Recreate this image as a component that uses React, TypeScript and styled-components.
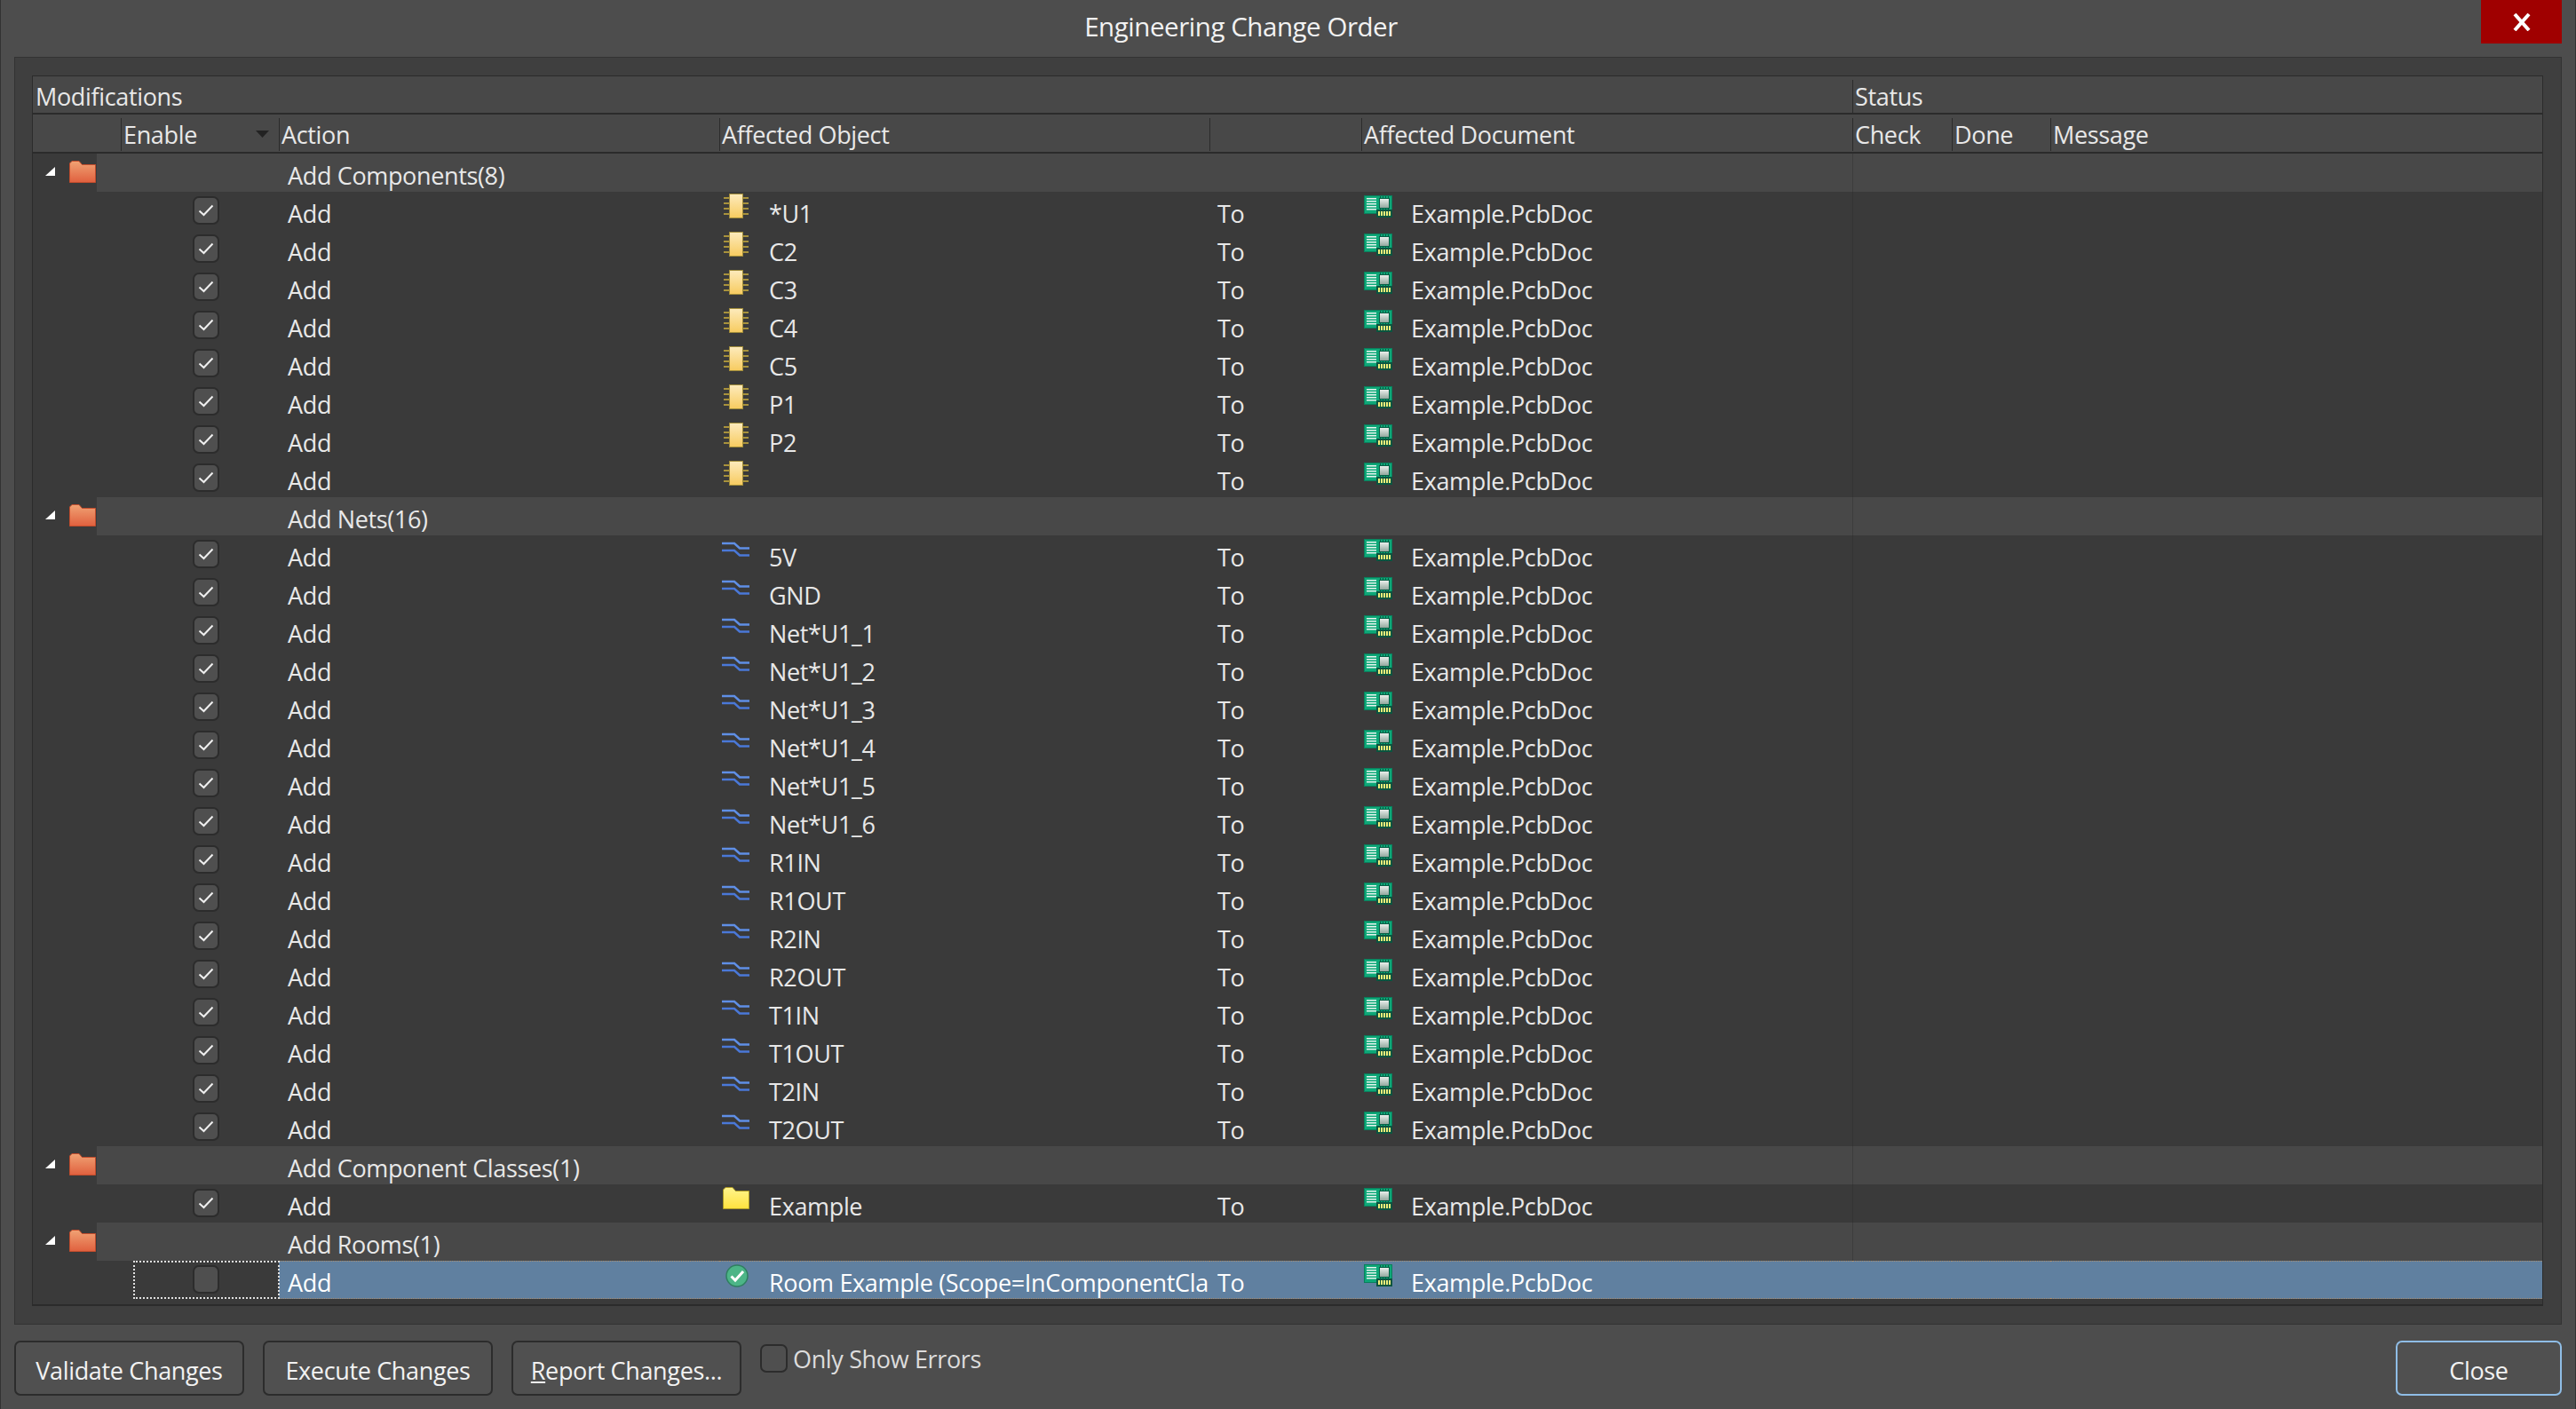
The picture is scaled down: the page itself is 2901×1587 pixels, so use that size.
import React from 'react'
import styled, { createGlobalStyle } from 'styled-components'

const COLUMNS = '99px 178px 496px 552px 171px 553px 112px 111px 1fr'
const LINE = '#2b2b2b'

const GlobalStyle = createGlobalStyle`
  html, body {
    margin: 0;
    padding: 0;
    background: #4d4d4d;
  }
  * {
    box-sizing: border-box;
  }
`

const Window = styled.div`
  width: 2901px;
  height: 1587px;
  display: flex;
  flex-direction: column;
  background: #4d4d4d;
  color: #e8e8e8;
  font-family: 'Open Sans', 'Noto Sans', sans-serif;
  font-size: 27px;
  letter-spacing: -0.35px;
  border-left: 1px solid #333;
  border-right: 1px solid #333;
  overflow: hidden;
`

const TitleBar = styled.div`
  position: relative;
  height: 64px;
  flex: none;
  text-align: center;
  font-size: 29.5px;
  letter-spacing: -0.45px;
  line-height: 60px;
  color: #f2f2f2;
  padding-right: 106px;
`

const CloseBox = styled.div`
  position: absolute;
  top: 0;
  right: 15px;
  width: 91px;
  height: 49px;
  background: #a00000;
  display: flex;
  align-items: center;
  justify-content: center;
`

const Panel = styled.div`
  margin: 0 15px;
  height: 1428px;
  flex: none;
  padding: 20px 20px 20px 19px;
  background: #3f3f3f;
  border: 1px solid #333;
`

const Table = styled.div`
  height: 100%;
  background: #3a3a3a;
  border-style: solid;
  border-width: 1px 1px 2px 1px;
  border-color: ${LINE};
`

const HeaderTop = styled.div`
  display: grid;
  grid-template-columns: 2049px 1fr;
  height: 43px;
  background: #484848;
  border-bottom: 2px solid ${LINE};
`

const HeaderBottom = styled.div`
  display: grid;
  grid-template-columns: ${COLUMNS};
  height: 44px;
  background: #484848;
  border-bottom: 2px solid ${LINE};
`

const HeaderCell = styled.div<{ $divider?: boolean }>`
  display: flex;
  justify-content: space-between;
  margin: 4px 0 3px;
  padding: 0 11px 0 2px;
  line-height: 37px;
  white-space: nowrap;
  border-left: 1px solid ${({ $divider }) => ($divider ? LINE : 'transparent')};
`

const SortArrow = styled.span`
  width: 15px;
  height: 8px;
  margin-top: 14px;
  background: #222;
  clip-path: polygon(0 0, 100% 0, 50% 100%);
`

const GroupRow = styled.div`
  display: flex;
  height: 43px;
`

const GroupLead = styled.div`
  width: 72px;
  flex: none;
  display: flex;
  align-items: flex-start;
  padding: 8px 0 0 14px;
`

const Expander = styled.span`
  width: 11px;
  height: 10px;
  flex: none;
  margin: 7px 16px 0 0;
  background: #fff;
  clip-path: polygon(100% 0, 100% 100%, 0 100%);
`

const GroupBody = styled.div`
  flex: 1;
  display: grid;
  grid-template-columns: 1977px 1fr;
  background: #484848;
`

const GroupLabel = styled.div`
  padding-left: 215px;
  line-height: 43px;
  padding-top: 3px;
  white-space: nowrap;
`

const StatusCell = styled.div`
  border-left: 1px solid #3c3c3c;
`

const Row = styled.div`
  display: grid;
  grid-template-columns: ${COLUMNS};
  height: 43px;
`

const Cell = styled.div<{ $selected?: boolean; $status?: boolean }>`
  display: flex;
  align-items: flex-start;
  height: 43px;
  line-height: 43px;
  white-space: nowrap;
  overflow: hidden;
  color: ${({ $selected }) => ($selected ? '#fff' : 'inherit')};
  background: ${({ $selected }) => ($selected ? '#6080a0' : 'transparent')};
  border-top: ${({ $selected }) => ($selected ? '1px dotted #a98f74' : 'none')};
  border-bottom: ${({ $selected }) => ($selected ? '1px dotted #a98f74' : 'none')};
  border-left: ${({ $status, $selected }) => ($status && !$selected ? '1px solid #333' : 'none')};

  & > span {
    margin-top: ${({ $selected }) => ($selected ? '-1px' : '0')};
  }
`

const EnableCell = styled.div`
  position: relative;
  padding: 5px 0 0 81px;
`

const FocusBox = styled.div`
  position: absolute;
  top: 0;
  bottom: 0;
  left: 14px;
  right: -1px;
  border: 2px dotted #e0e0e0;
`

const CheckBox = styled.span<{ $wide?: boolean }>`
  width: ${({ $wide }) => ($wide ? 31 : 30)}px;
  height: 32px;
  flex: none;
  display: flex;
  align-items: center;
  justify-content: center;
  background: #4f4f4f;
  border: 2px solid #2c2c2c;
  border-radius: 7px;
`

const CellText = styled.span<{ $left: number }>`
  position: relative;
  top: 3px;
  padding-left: ${({ $left }) => $left}px;
`

const ObjectSlot = styled.span<{ $top: number; $left: number; $width: number }>`
  flex: none;
  display: flex;
  width: ${({ $width }) => $width}px;
  padding-top: ${({ $top }) => $top}px;
  margin-left: ${({ $left }) => $left}px;
`

const Footer = styled.div`
  flex: 1;
  display: flex;
  align-items: flex-start;
  padding: 18px 15px 0 15px;
  gap: 21px;
`

const Button = styled.div<{ $focused?: boolean }>`
  width: ${({ $focused }) => ($focused ? 187 : 259)}px;
  height: 62px;
  flex: none;
  display: flex;
  align-items: center;
  justify-content: center;
  padding-top: 4px;
  margin-left: ${({ $focused }) => ($focused ? 'auto' : '0')};
  background: #505050;
  border: 2px solid ${({ $focused }) => ($focused ? '#8fbde6' : '#2c2c2c')};
  border-radius: 7px;
  color: #f2f2f2;
`

const Underlined = styled.span`
  text-decoration: underline;
`

const OnlyErrors = styled.div`
  display: flex;
  align-items: flex-start;
  gap: 6px;
  margin-top: 4px;
  line-height: 34px;
  color: #dcdcdc;
`

const Tick = () => (
  <svg width="18" height="14" viewBox="0 0 18 14">
    <path d="M1.5 7.5 L6.5 12 L16.5 1.5" fill="none" stroke="#efefef" strokeWidth="2" />
  </svg>
)

const Folder = ({ top, bottom, edge, id }: { top: string; bottom: string; edge: string; id: string }) => (
  <svg width="30" height="25" viewBox="0 0 30 25">
    <defs>
      <linearGradient id={id} x1="0" y1="0" x2="0" y2="1">
        <stop offset="0" stopColor={top} />
        <stop offset="1" stopColor={bottom} />
      </linearGradient>
    </defs>
    <path d="M.5 24.5 V3 L3 .5 H11 L14.500 4.500 H29.500 V24.500 Z" fill={`url(#${id})`} stroke={edge} />
  </svg>
)

const ChipIcon = () => (
  <svg width="28" height="28" viewBox="0 0 28 28">
    <defs>
      <linearGradient id="chipFill" x1="0" y1="0" x2="0" y2="1">
        <stop offset="0" stopColor="#fdebbd" />
        <stop offset="1" stopColor="#f7cb5f" />
      </linearGradient>
    </defs>
    {[5, 11, 17, 23].map(y => (
      <rect key={y} x="0" y={y - 1} width="28" height="2" fill="#a8923c" />
    ))}
    <rect x="6.500" y=".5" width="15" height="27" fill="url(#chipFill)" stroke="#a08c3a" />
  </svg>
)

const NetIcon = () => (
  <svg width="31" height="18" viewBox="0 0 31 18">
    <path d="M0 2 H14 L20 7.500 H31" fill="none" stroke="#5f8fe6" strokeWidth="2.500" />
    <path d="M0 10 H14 L20 15.500 H31" fill="none" stroke="#4a78d8" strokeWidth="2.500" />
  </svg>
)

const RoomIcon = () => (
  <svg width="26" height="26" viewBox="0 0 26 26">
    <circle cx="13" cy="13" r="12" fill="#4cb587" stroke="#2f7f60" strokeWidth="1.500" />
    <path d="M6.500 13.500 L11 18 L20 8" fill="none" stroke="#fff" strokeWidth="3" />
  </svg>
)

const PcbIcon = () => (
  <svg width="32" height="25" viewBox="0 0 32 25">
    <defs>
      <linearGradient id="pcbChip" x1="0" y1="0" x2="0" y2="1">
        <stop offset="0" stopColor="#eef2ef" />
        <stop offset="1" stopColor="#8fa59b" />
      </linearGradient>
    </defs>
    <rect x=".5" y=".5" width="31" height="20" fill="#0ea878" stroke="#0a7f5c" />
    {[3, 6, 9, 12, 15].map(y => (
      <rect key={y} x="3" y={y} width="11" height="1.500" fill="#e6f5ef" />
    ))}
    {[19, 22, 25, 28].map(x => (
      <rect key={x} x={x - 1} y="1" width="1" height="16" fill="#075f46" />
    ))}
    <rect x="17.500" y="3.500" width="11" height="11" fill="url(#pcbChip)" stroke="#075f46" />
    <rect x="14" y="16" width="18" height="9" fill="#0a5540" />
    {[16, 19, 22, 25, 28].map(x => (
      <rect key={x} x={x} y="18" width="2" height="5" fill="#f2ee7a" />
    ))}
  </svg>
)

type Item = {
  name: string
  kind: 'chip' | 'net' | 'folder' | 'room'
  checked?: boolean
}

type Group = {
  label: string
  items: Item[]
}

const GROUPS: Group[] = [
  {
    label: 'Add Components(8)',
    items: ['*U1', 'C2', 'C3', 'C4', 'C5', 'P1', 'P2', ''].map(name => ({ name, kind: 'chip' as const, checked: true })),
  },
  {
    label: 'Add Nets(16)',
    items: [
      '5V', 'GND', 'Net*U1_1', 'Net*U1_2', 'Net*U1_3', 'Net*U1_4', 'Net*U1_5', 'Net*U1_6',
      'R1IN', 'R1OUT', 'R2IN', 'R2OUT', 'T1IN', 'T1OUT', 'T2IN', 'T2OUT',
    ].map(name => ({ name, kind: 'net' as const, checked: true })),
  },
  {
    label: 'Add Component Classes(1)',
    items: [{ name: 'Example', kind: 'folder', checked: true }],
  },
  {
    label: 'Add Rooms(1)',
    items: [{ name: 'Room Example (Scope=InComponentCla', kind: 'room' }],
  },
]

const ICON_SLOT = {
  chip: { top: 2, left: 5, width: 28 },
  net: { top: 7, left: 3, width: 31 },
  folder: { top: 3, left: 4, width: 30 },
  room: { top: 4, left: 7, width: 26 },
}

const ItemIcon = ({ kind }: { kind: Item['kind'] }) => {
  if (kind === 'chip') return <ChipIcon />
  if (kind === 'net') return <NetIcon />
  if (kind === 'room') return <RoomIcon />
  return <Folder id="classFolder" top="#fff48c" bottom="#ffe23e" edge="#ab9726" />
}

const ItemRow = ({ item }: { item: Item }) => {
  const selected = item.kind === 'room'
  const slot = ICON_SLOT[item.kind]
  return (
    <Row>
      <div />
      <EnableCell>
        <CheckBox>{item.checked && <Tick />}</CheckBox>
        {selected && <FocusBox />}
      </EnableCell>
      <Cell $selected={selected}><CellText $left={10}>Add</CellText></Cell>
      <Cell $selected={selected}>
        <ObjectSlot $top={slot.top} $left={slot.left} $width={slot.width}><ItemIcon kind={item.kind} /></ObjectSlot>
        <CellText $left={56 - slot.left - slot.width}>{item.name}</CellText>
      </Cell>
      <Cell $selected={selected}><CellText $left={9}>To</CellText></Cell>
      <Cell $selected={selected}>
        <ObjectSlot $top={4} $left={3} $width={32}><PcbIcon /></ObjectSlot>
        <CellText $left={21}>Example.PcbDoc</CellText>
      </Cell>
      <Cell $selected={selected} $status />
      <Cell $selected={selected} />
      <Cell $selected={selected} />
    </Row>
  )
}

const App: React.FC = () => (
  <Window>
    <GlobalStyle />
    <TitleBar>
      Engineering Change Order
      <CloseBox>
        <svg width="22" height="20" viewBox="0 0 22 20">
          <path d="M3 1 L19 19 M19 1 L3 19" stroke="#fff" strokeWidth="4" />
        </svg>
      </CloseBox>
    </TitleBar>
    <Panel>
      <Table>
        <HeaderTop>
          <HeaderCell>Modifications</HeaderCell>
          <HeaderCell $divider>Status</HeaderCell>
        </HeaderTop>
        <HeaderBottom>
          <div />
          <HeaderCell $divider>Enable<SortArrow /></HeaderCell>
          <HeaderCell $divider>Action</HeaderCell>
          <HeaderCell $divider>Affected Object</HeaderCell>
          <HeaderCell $divider />
          <HeaderCell $divider>Affected Document</HeaderCell>
          <HeaderCell $divider>Check</HeaderCell>
          <HeaderCell $divider>Done</HeaderCell>
          <HeaderCell $divider>Message</HeaderCell>
        </HeaderBottom>
        {GROUPS.map(group => (
          <React.Fragment key={group.label}>
            <GroupRow>
              <GroupLead>
                <Expander />
                <Folder id={`folder-${group.label.length}`} top="#f0a274" bottom="#e0603e" edge="#c24c2c" />
              </GroupLead>
              <GroupBody>
                <GroupLabel>{group.label}</GroupLabel>
                <StatusCell />
              </GroupBody>
            </GroupRow>
            {group.items.map((item, i) => <ItemRow key={item.name + i} item={item} />)}
          </React.Fragment>
        ))}
      </Table>
    </Panel>
    <Footer>
      <Button>Validate Changes</Button>
      <Button>Execute Changes</Button>
      <Button><span><Underlined>R</Underlined>eport Changes...</span></Button>
      <OnlyErrors>
        <CheckBox $wide />
        Only Show Errors
      </OnlyErrors>
      <Button $focused>Close</Button>
    </Footer>
  </Window>
)

export default App
